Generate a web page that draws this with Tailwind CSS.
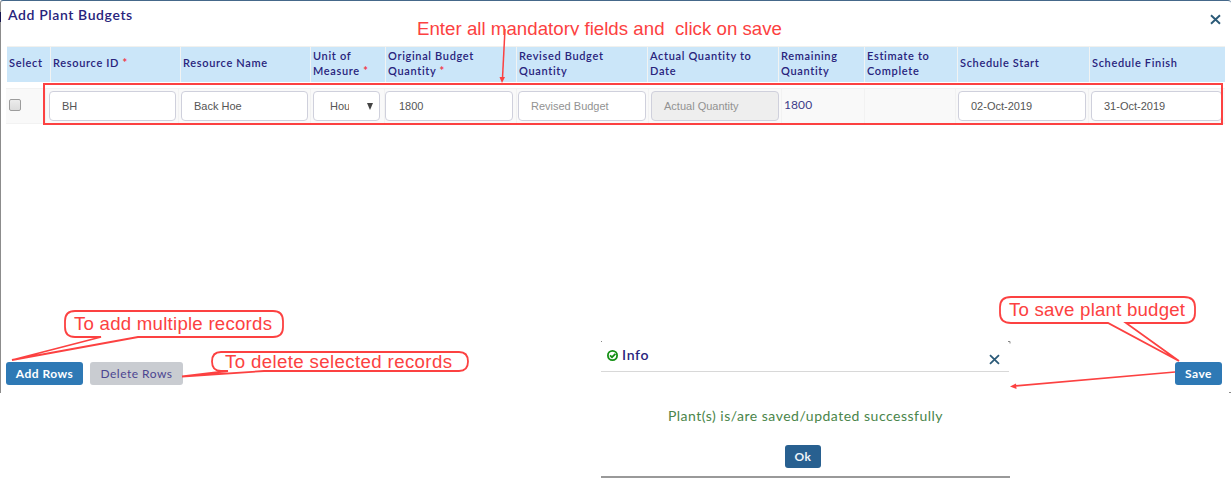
<!DOCTYPE html>
<html lang="en">
<head>
<meta charset="utf-8">
<title>Add Plant Budgets</title>
<script src="https://cdn.jsdelivr.net/npm/@tailwindcss/browser@4"></script>
</head>
<body class="relative h-[478px] w-[1231px] overflow-hidden bg-white font-['Lato',sans-serif] text-[#28237c]">
<main class="flex h-[393px] flex-col border-l border-t border-l-[#8c8c8c] border-t-[#45688a] rounded-tl-[3px] rounded-tr-[3px] pl-[5px]">
  <header class="flex h-[45px] items-start justify-between pl-[2px] pr-[10px]">
    <h1 class="pt-[4px] text-[14px] leading-[20px] font-semibold tracking-[0.6px]">Add Plant Budgets</h1>
    <svg class="mt-[13px] h-[11px] w-[11px]" viewBox="0 0 11 11" stroke="#2b5a78" stroke-width="1.9"><path d="M1 1.2L10 9.8M10 1.2L1 9.8"/></svg>
  </header>
  <div class="w-[1219px]">
    <div class="ml-px grid h-[36px] grid-cols-[43px_130px_130px_75px_131px_131px_131px_86px_93px_132px_135px] border-t border-[#f1f1ee] bg-[#cbe6f9] text-[11px] leading-[15px] font-semibold tracking-[0.66px] *:flex *:items-center *:border-[#f1f3f3] *:pl-[2px]">
      <div><span class="-mt-[4px]">Select</span></div>
      <div class="border-l"><span class="-mt-[4px]">Resource ID <b class="text-[#f04050]">*</b></span></div>
      <div class="border-l"><span class="-mt-[4px]">Resource Name</span></div>
      <div class="border-l"><span class="-mt-[4px]">Unit of<br>Measure <b class="text-[#f04050]">*</b></span></div>
      <div class="border-l"><span class="-mt-[4px]">Original Budget<br>Quantity <b class="text-[#f04050]">*</b></span></div>
      <div class="border-l"><span class="-mt-[4px]">Revised Budget<br>Quantity</span></div>
      <div class="border-l"><span class="-mt-[4px]">Actual Quantity to<br>Date</span></div>
      <div class="border-l"><span class="-mt-[4px]">Remaining<br>Quantity</span></div>
      <div class="border-l"><span class="-mt-[4px]">Estimate to<br>Complete</span></div>
      <div class="border-l"><span class="-mt-[4px]">Schedule Start</span></div>
      <div class="border-l"><span class="-mt-[4px]">Schedule Finish</span></div>
    </div>
    <div class="mt-[6px] grid h-[36px] grid-cols-[39px_133px_132px_74px_132px_132px_133px_83px_91px_133px_136px] border-y border-[#f2f2f2] bg-[#f9f9f9] font-['Liberation_Sans',sans-serif] text-[11px] text-[#555] *:border-[#f2f2f2]">
      <div class="pt-[10px] pl-[3px]"><div class="h-[12px] w-[12px] rounded-[2px] border border-[#9c9c9c] bg-linear-to-b from-[#ececec] to-[#dcdcdc]"></div></div>
      <div class="border-l pt-[2px] pl-[3px]"><div class="flex h-[30px] w-[127px] items-center rounded-[4px] border border-[#cfd0dc] bg-white pl-[12px]">BH</div></div>
      <div class="border-l pt-[2px] pl-[2px]"><div class="flex h-[30px] w-[127px] items-center rounded-[4px] border border-[#cfd0dc] bg-white pl-[12px]">Back Hoe</div></div>
      <div class="border-l pt-[2px] pl-[2px]"><div class="flex h-[30px] w-[67px] items-center rounded-[4px] border border-[#cfd0dc] bg-white pl-[16px]"><span class="w-[19px] overflow-hidden whitespace-nowrap">Hou</span><svg class="ml-[18px] h-[7px] w-[6px]" viewBox="0 0 6 7" fill="#444"><path d="M0 0H6L3 7Z"/></svg></div></div>
      <div class="border-l pt-[2px]"><div class="flex h-[30px] w-[128px] items-center rounded-[4px] border border-[#cfd0dc] bg-white pl-[13px]">1800</div></div>
      <div class="border-l pt-[2px] pl-px"><div class="flex h-[30px] w-[128px] items-center rounded-[4px] border border-[#cfd0dc] bg-white pl-[12px] text-[#929292]">Revised Budget</div></div>
      <div class="border-l pt-[2px] pl-[2px]"><div class="flex h-[30px] w-[128px] items-center rounded-[4px] border border-[#cfd0dc] bg-[#eee] pl-[12px] text-[#929292]">Actual Quantity</div></div>
      <div class="border-l pt-[7px] pl-[2px] font-['Lato',sans-serif] text-[12px] leading-[18px] tracking-[0.1px] text-[#3d3d8a]">1800</div>
      <div class="border-l"></div>
      <div class="border-l pt-[2px] pl-[2px]"><div class="flex h-[30px] w-[128px] items-center rounded-[4px] border border-[#cfd0dc] bg-white pl-[12px]">02-Oct-2019</div></div>
      <div class="border-l pt-[2px] pl-[2px]"><div class="flex h-[30px] w-[131px] items-center rounded-[4px] border border-[#cfd0dc] bg-white pl-[12px]">31-Oct-2019</div></div>
    </div>
  </div>
  <footer class="mt-auto mb-[8px] flex h-[23px] gap-[7px] pr-[9px] text-[12px] leading-[24px] tracking-[0.45px]">
    <div class="w-[77px] rounded-[3px] bg-[#2e79b5] text-center font-bold text-white">Add Rows</div>
    <div class="w-[93px] rounded-[3px] bg-[#c9ccd1] text-center tracking-[0.5px] text-[#4c4590]">Delete Rows</div>
    <div class="ml-auto w-[47px] rounded-[3px] bg-[#2e79b5] text-center font-bold text-white">Save</div>
  </footer>
</main>

<section class="absolute top-[341px] left-[601px] flex h-[137px] w-[409px] flex-col border-b-2 border-[#999] bg-white">
  <div class="mr-[1px] flex h-[31px] items-start border-b border-[#d8d8d8] pl-[6px] pr-[9px]">
    <svg class="mt-[9px] h-[11px] w-[11px]" viewBox="0 0 11 11" fill="none" stroke="#149014"><circle cx="5.5" cy="5.5" r="4.6" stroke-width="1.8"/><path d="M3 5.3L5 7.2L8.4 3.8" stroke-width="1.8"/></svg>
    <h2 class="ml-[4px] pt-[4px] text-[14px] leading-[20px] font-semibold tracking-[0.7px]">Info</h2>
    <svg class="mt-[13px] ml-auto h-[11px] w-[11px]" viewBox="0 0 11 11" stroke="#2b5a78" stroke-width="1.8"><path d="M1 1.2L10 9.8M10 1.2L1 9.8"/></svg>
  </div>
  <p class="mt-[34px] text-center text-[14px] leading-[20px] tracking-[0.5px] text-[#4a854a]">Plant(s) is/are saved/updated successfully</p>
  <div class="mt-[19px] ml-[184px] h-[23px] w-[36px] rounded-[3px] bg-[#286090] text-center text-[12px] leading-[24px] font-bold tracking-[0.4px] text-[#eef4fa]">Ok</div>
</section>

<svg class="absolute inset-0 h-[478px] w-[1231px]" viewBox="0 0 1231 478" fill="none" stroke="#fc4141" stroke-width="2">
  <path d="M601 341.5h1M1008 341.5h2v2M1229 392.5h2" stroke="#888" stroke-width="1"/>
  <path d="M0 12v10" stroke="#171750"/>
  <rect x="44" y="84" width="1178" height="40"/>
  <path d="M505 29L502.500 78" stroke-width="1.5"/>
  <path d="M499.500 77L505 77L502 83Z" fill="#fc4141" stroke="none"/>
  <path d="M101 337H75Q65 337 65 327V321Q65 311 75 311H273Q283 311 283 321V327Q283 337 273 337H138L12 360Z" fill="white" stroke-width="1.8"/>
  <path d="M228 371H221Q212 371 212 361.500Q212 352 221 352H459Q468 352 468 361.500Q468 371 459 371H264L182 376.500Z" fill="white" stroke-width="1.8"/>
  <path d="M1108 323H1011Q1000 323 1000 313V307Q1000 297 1011 297H1184Q1195 297 1195 307V313Q1195 323 1184 323H1126L1179 361Z" fill="white" stroke-width="1.8"/>
  <path d="M1175 372L1014 386" stroke-width="1.7"/>
  <path d="M1010 386.500L1016 383.500L1016.500 389Z" fill="#fc4141" stroke="none"/>
  <g fill="#fc4141" stroke="none" font-family="Liberation Sans, Arial, sans-serif" font-size="18.67">
    <svg x="410" y="15" width="380" height="20.400"><text x="7" y="20" textLength="365" xml:space="preserve">Enter all mandatory fields and  click on save</text></svg>
    <text x="74" y="330" textLength="198">To add multiple records</text>
    <text x="225" y="368" textLength="227">To delete selected records</text>
    <text x="1009" y="316" textLength="176">To save plant budget</text>
  </g>
</svg>
</body>
</html>
